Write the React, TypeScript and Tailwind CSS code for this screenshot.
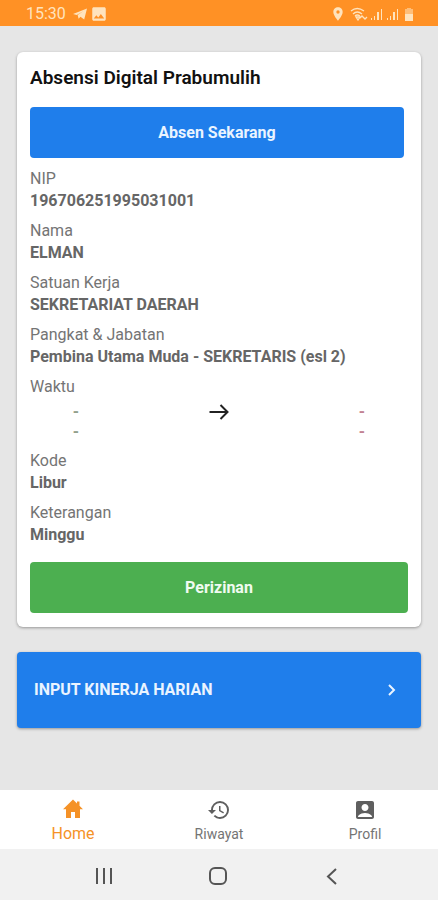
import React from 'react';
import { MdAccountBox, MdHistory, MdImage, MdLocationOn } from 'react-icons/md';

const before = [
  { label: 'NIP', value: '196706251995031001' },
  { label: 'Nama', value: 'ELMAN' },
  { label: 'Satuan Kerja', value: 'SEKRETARIAT DAERAH' },
  { label: 'Pangkat & Jabatan', value: 'Pembina Utama Muda - SEKRETARIS (esl 2)' },
];

const after = [
  { label: 'Kode', value: 'Libur' },
  { label: 'Keterangan', value: 'Minggu' },
];

function Field({ label, value }: { label: string; value: string }) {
  return (
    <div>
      <dt className="text-[#747474]">{label}</dt>
      <dd className="font-bold text-[#666666]">{value}</dd>
    </div>
  );
}

function Signal() {
  return (
    <svg viewBox="0 0 13 13" className="h-[13px] w-[13px]" fill="currentColor" aria-hidden="true">
      <path d="M1 10h1v2H1zM4 8h1v4H4zM7 4h2v8H7zM11 1h1v11h-1z" />
    </svg>
  );
}

function StatusBar() {
  return (
    <header className="flex h-[26px] items-center justify-between bg-[#ff9125] pt-[2px] pr-6 pl-[26px] text-[#ffe3bd]">
      <div className="flex items-center">
        <span className="w-[39px] text-base leading-5">15:30</span>
        <svg viewBox="0 0 15 12" className="ml-2 h-3 w-[14px]" fill="currentColor" aria-hidden="true">
          <path d="M0 6 15 0 12 12 8 9 6 11 5 7 11 3 4 7z" />
        </svg>
        <MdImage className="ml-[3px] h-[18px] w-[18px]" />
      </div>
      <div className="flex items-center">
        <MdLocationOn className="mr-1 h-4 w-4" />
        <svg viewBox="0 0 18 14" className="h-[14px] w-[18px]" fill="none" stroke="currentColor" strokeWidth="1.3" aria-hidden="true">
          <path d="M1 4Q7 -1 14 4M3 7Q7 3 12 7M5 9Q7 7 10 9" />
          <path d="m6 10 2 3 2-3zM10 11l2-2 2 2M13 10l2 2 2-2" />
        </svg>
        <span className="ml-[2px]"><Signal /></span>
        <span className="ml-[3px]"><Signal /></span>
        <svg viewBox="0 0 10 13" className="ml-[5px] h-[13px] w-[10px]" fill="currentColor" aria-hidden="true">
          <path d="M3 0h4v1h2v5H1V1h2z" opacity=".55" />
          <path d="M1 6h8v7H1z" />
        </svg>
      </div>
    </header>
  );
}

function TabBar() {
  return (
    <nav className="grid h-[59px] grid-cols-3 bg-white text-[#747474]">
      <a href="#home" aria-current="page" className="flex flex-col items-center pt-2 text-base leading-6 text-[#f59227]">
        <svg viewBox="0 0 24 24" className="h-6 w-6" fill="currentColor" aria-hidden="true">
          <path d="M12 1.5 2 11.2h3V20h5v-6h4v6h5v-8.800h3L18.500 7.800V3.500h-2.500v1.900z" />
        </svg>
        Home
      </a>
      <a href="#riwayat" className="flex flex-col items-center pt-2 text-sm leading-6">
        <MdHistory className="h-6 w-6 text-[#5f5f5f]" />
        Riwayat
      </a>
      <a href="#profil" className="flex flex-col items-center pt-2 text-sm leading-6">
        <MdAccountBox className="h-6 w-6 text-[#5f5f5f]" />
        Profil
      </a>
    </nav>
  );
}

function SystemBar() {
  return (
    <div className="flex h-[51px] items-center justify-center gap-[90px] bg-[#f1f1f1] pt-[2px] pr-[2px] text-[#555555]">
      <button type="button" aria-label="Aplikasi terbaru">
        <svg viewBox="0 0 24 24" className="h-6 w-6" fill="none" stroke="currentColor" strokeWidth="2">
          <path d="M5 4v16M12 4v16M19 4v16" />
        </svg>
      </button>
      <button type="button" aria-label="Beranda">
        <svg viewBox="0 0 24 24" className="h-6 w-6" fill="none" stroke="currentColor" strokeWidth="2">
          <rect x="4" y="4" width="16" height="16" rx="5" />
        </svg>
      </button>
      <button type="button" aria-label="Kembali">
        <svg viewBox="0 0 24 24" className="h-6 w-6" fill="none" stroke="currentColor" strokeWidth="2">
          <path d="m16 5-8 7.500 8 7.500" />
        </svg>
      </button>
    </div>
  );
}

export default function App() {
  return (
    <div className="flex min-h-screen flex-col bg-[#e6e6e6] font-[Roboto,'Noto_Sans',sans-serif]">
      <StatusBar />
      <main className="flex flex-1 flex-col gap-[25px] px-[17px] pt-[26px] pb-4">
        <section className="rounded-md bg-white px-[13px] pt-[14px] pb-[14px] shadow-[0_1px_3px_rgba(0,0,0,0.35)]">
          <h1 className="text-[19px] leading-6 font-semibold text-[#111111]">Absensi Digital Prabumulih</h1>
          <div className="pr-1">
            <button type="button" className="mt-[17px] h-[51px] w-full rounded-[4px] bg-[#1f7eeb] text-base font-bold text-[#eaf4ff]">
              Absen Sekarang
            </button>
          </div>
          <dl className="mt-[10px] flex flex-col gap-2 text-base leading-[22px]">
            {before.map((f) => (
              <Field key={f.label} label={f.label} value={f.value} />
            ))}
            <div>
              <dt className="text-[#747474]">Waktu</dt>
              <dd className="mt-1 flex items-start justify-between text-base leading-5 font-bold">
                <span className="flex w-[92px] flex-col text-center text-[#92a08c]">
                  <span>-</span>
                  <span>-</span>
                </span>
                <svg viewBox="0 0 20 20" className="h-5 w-5" fill="none" stroke="#222222" strokeWidth="2" aria-hidden="true">
                  <path d="M0.500 10H18M11.500 3l7 7-7 7" />
                </svg>
                <span className="flex w-[92px] flex-col text-center text-[#c28292]">
                  <span>-</span>
                  <span>-</span>
                </span>
              </dd>
            </div>
            {after.map((f) => (
              <Field key={f.label} label={f.label} value={f.value} />
            ))}
          </dl>
          <button type="button" className="mt-4 h-[51px] w-full rounded-[4px] bg-[#4caf50] text-base font-bold text-[#f0fbf0]">
            Perizinan
          </button>
        </section>
        <button
          type="button"
          className="flex h-[76px] w-full items-center justify-between rounded-[4px] bg-[#1f7eeb] pr-[23px] pl-[17px] text-base font-bold text-[#eaf4ff] shadow-[0_1px_3px_rgba(0,0,0,0.35)]"
        >
          INPUT KINERJA HARIAN
          <svg viewBox="0 0 12 14" className="h-[14px] w-3" fill="none" stroke="currentColor" strokeWidth="2" aria-hidden="true">
            <path d="m3 2 5 5-5 5" />
          </svg>
        </button>
      </main>
      <footer>
        <TabBar />
        <SystemBar />
      </footer>
    </div>
  );
}
